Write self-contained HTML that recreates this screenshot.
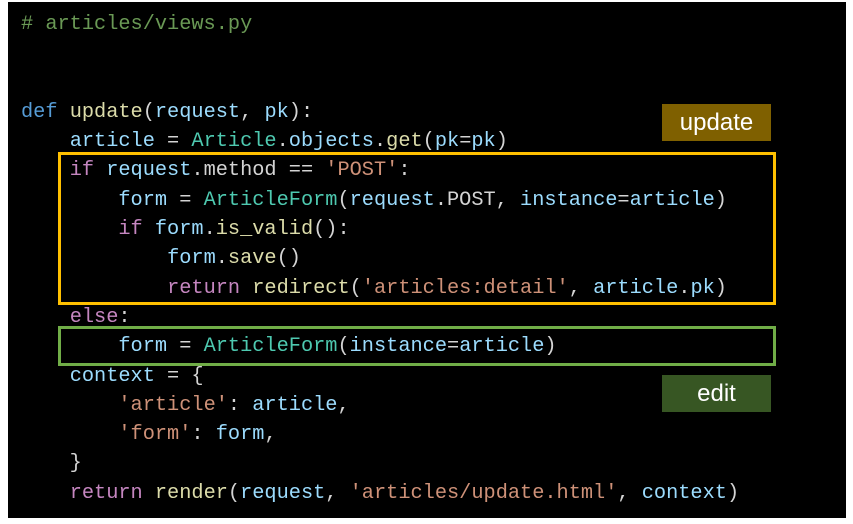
<!DOCTYPE html>
<html><head><style>
html,body{margin:0;padding:0;background:#fff;width:853px;height:524px;overflow:hidden}
#f{position:absolute;left:8px;top:2px;width:838px;height:516px;background:#000}
pre{position:absolute;left:21px;top:10px;margin:0;font-family:"Liberation Mono",monospace;font-size:20.3px;line-height:29.3px;color:#d4d4d4}
.c{color:#6a9955}.k{color:#569cd6}.fn{color:#dcdcaa}.v{color:#9cdcfe}.t{color:#4ec9b0}.p{color:#c586c0}.s{color:#ce9178}
.box{position:absolute;box-sizing:border-box}
.lab{position:absolute;color:#fff;font-family:"Liberation Sans",sans-serif;font-size:24px;text-align:center}
</style></head><body>
<div id="f"></div>
<pre><span class="c"># articles/views.py</span>


<span class="k">def</span> <span class="fn">update</span>(<span class="v">request</span>, <span class="v">pk</span>):
    <span class="v">article</span> = <span class="t">Article</span>.<span class="v">objects</span>.<span class="fn">get</span>(<span class="v">pk</span>=<span class="v">pk</span>)
    <span class="p">if</span> <span class="v">request</span>.method == <span class="s">'POST'</span>:
        <span class="v">form</span> = <span class="t">ArticleForm</span>(<span class="v">request</span>.POST, <span class="v">instance</span>=<span class="v">article</span>)
        <span class="p">if</span> <span class="v">form</span>.<span class="fn">is_valid</span>():
            <span class="v">form</span>.<span class="fn">save</span>()
            <span class="p">return</span> <span class="fn">redirect</span>(<span class="s">'articles:detail'</span>, <span class="v">article</span>.<span class="v">pk</span>)
    <span class="p">else</span>:
        <span class="v">form</span> = <span class="t">ArticleForm</span>(<span class="v">instance</span>=<span class="v">article</span>)
    <span class="v">context</span> = {
        <span class="s">'article'</span>: <span class="v">article</span>,
        <span class="s">'form'</span>: <span class="v">form</span>,
    }
    <span class="p">return</span> <span class="fn">render</span>(<span class="v">request</span>, <span class="s">'articles/update.html'</span>, <span class="v">context</span>)</pre>
<div class="box" style="left:58px;top:152px;width:718px;height:153px;border:3px solid #ffc000"></div>
<div class="box" style="left:58px;top:326px;width:718px;height:40px;border:3px solid #70ad47"></div>
<div class="lab" style="left:662px;top:104px;width:109px;height:37px;line-height:37px;background:#7f6000">update</div>
<div class="lab" style="left:662px;top:375px;width:109px;height:37px;line-height:37px;background:#375623">edit</div>
</body></html>
